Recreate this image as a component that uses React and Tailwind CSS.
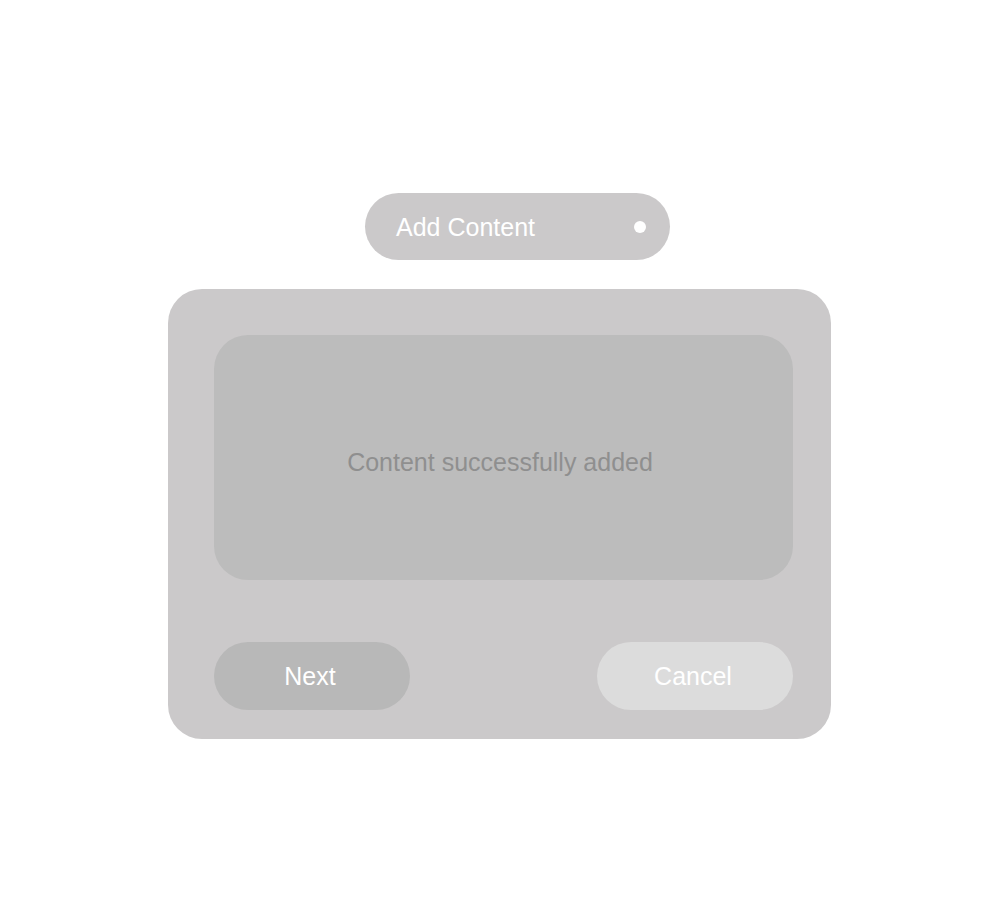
export default function App() {
  return (
    <div
      className="w-[1000px] h-[900px] bg-white flex flex-col items-center"
      style={{ fontFamily: '"Liberation Sans", Arial, sans-serif' }}
    >
      <div className="mt-[193px] ml-[35px] w-[305px] h-[67px] rounded-full bg-[#cbc9ca] flex items-center justify-between pl-[31px] pr-[24px]">
        <span className="text-white text-[25px] leading-none mt-[2px]">Add Content</span>
        <span className="w-[12px] h-[12px] rounded-full bg-white" />
      </div>
      <div className="mt-[29px] ml-[-1px] w-[663px] h-[450px] rounded-[34px] bg-[#cbc9ca] pt-[46px] pl-[46px] pr-[38px] pb-[29px] flex flex-col">
        <div className="h-[245px] rounded-[34px] bg-[#bcbcbc] flex items-center justify-center">
          <span className="text-[#8f8f8f] text-[25px] leading-none -ml-[7px] mt-[9px]">Content successfully added</span>
        </div>
        <div className="mt-auto flex justify-between">
          <button className="w-[196px] h-[68px] rounded-full bg-[#b8b8b8] text-white text-[25px] pr-[4px] pt-[2px]">Next</button>
          <button className="w-[196px] h-[68px] rounded-full bg-[#dcdcdc] text-white text-[25px] pr-[4px] pt-[2px]">Cancel</button>
        </div>
      </div>
    </div>
  );
}
